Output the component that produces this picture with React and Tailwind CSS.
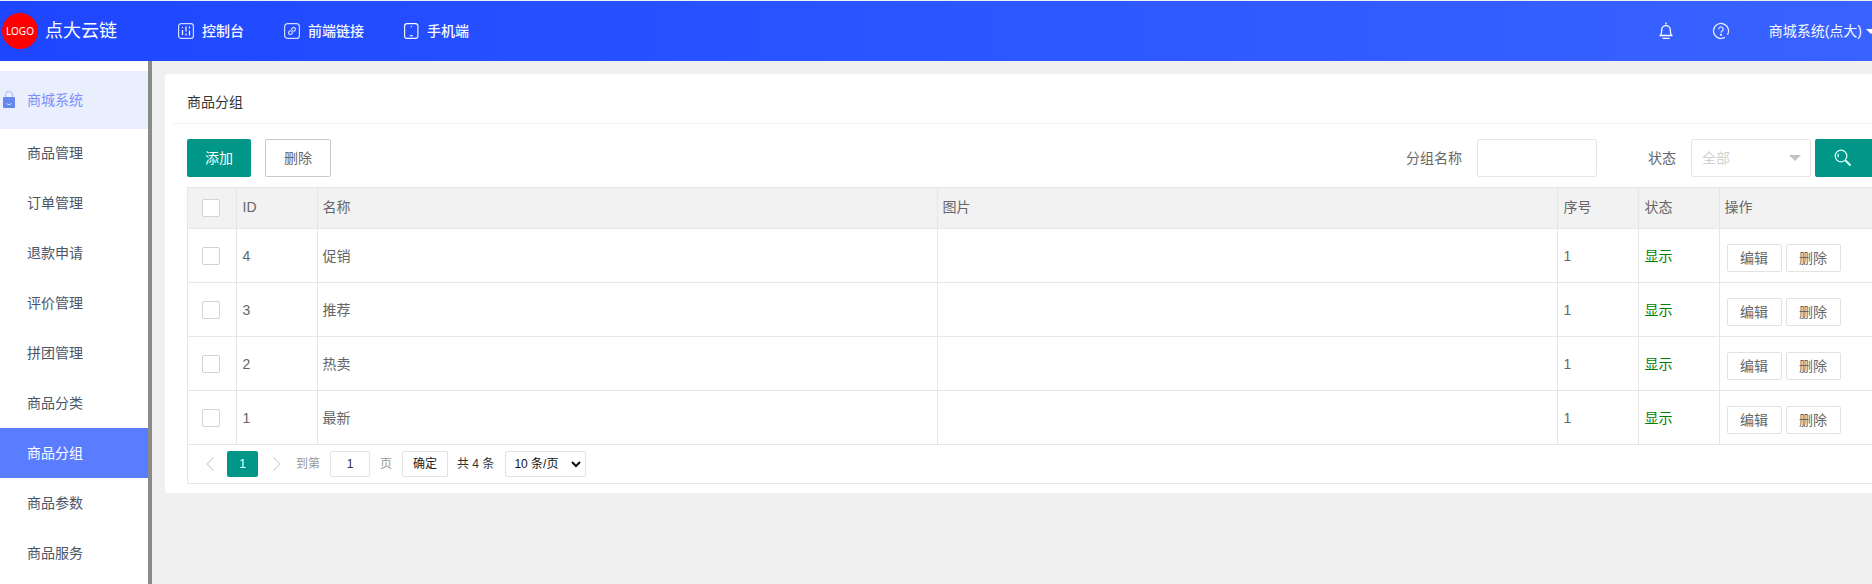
const FONT = "font-['Liberation_Sans','Noto_Sans_CJK_SC',sans-serif]";

const SideItems = ["商品管理", "订单管理", "退款申请", "评价管理", "拼团管理", "商品分类", "商品分组", "商品参数", "商品服务"];
const Rows = [["4", "促销"], ["3", "推荐"], ["2", "热卖"], ["1", "最新"]];

function Sliders() {
  return (
    <svg width="16" height="16" viewBox="0 0 16 16" fill="none" stroke="#d3dcff" strokeWidth="1.200">
      <rect x="0.600" y="0.600" width="14.800" height="14.800" rx="2.500" />
      <path d="M4.500 7v5M4.500 4v1M8 3.500v5M8 10.500v2M11.500 3.500v2M11.500 7.500v5" stroke="#fff" />
    </svg>
  );
}
function LinkBox() {
  return (
    <svg width="16" height="16" viewBox="0 0 16 16" fill="none" stroke="#d3dcff" strokeWidth="1.200">
      <rect x="0.600" y="0.600" width="14.800" height="14.800" rx="3" />
      <path d="M7 6.500l1.600-1.600a1.700 1.700 0 012.400 2.400L9.600 8.800M9 9.500l-1.600 1.600a1.700 1.700 0 01-2.400-2.400l1.400-1.500M6.800 9.200l2.400-2.400" />
    </svg>
  );
}
function Phone() {
  return (
    <svg width="15" height="16" viewBox="0 0 15 16" fill="none" stroke="#fff" strokeWidth="1.100">
      <rect x="0.600" y="0.600" width="13.300" height="14.800" rx="2.500" />
      <path d="M7.300 3v1.200M5.700 12.800h3.200" />
    </svg>
  );
}
function Bell() {
  return (
    <svg width="16" height="18" viewBox="0 0 16 18" fill="none" stroke="#fff" strokeWidth="1.300">
      <path d="M8 0.500v2M2.500 13.500c1-1.500 1.200-3 1.200-5.500a4.300 4.300 0 018.600 0c0 2.500.2 4 1.200 5.500zM1.500 13.500h13M4.500 16.300h7" />
    </svg>
  );
}
function Help() {
  return (
    <svg width="18" height="18" viewBox="0 0 18 18" fill="none" stroke="#e8edff" strokeWidth="1.200">
      <path d="M13 15.300A7.500 7.500 0 1115.500 12.700" />
      <path d="M6.800 7.200a2.200 2.200 0 114 1.200c-.7.700-1.800 1-1.800 2.300" />
      <circle cx="9" cy="12.800" r="0.500" fill="#fff" />
    </svg>
  );
}
function Bag() {
  return (
    <svg width="14" height="17" viewBox="0 0 14 17">
      <path d="M3.500 6V4a3.500 3.500 0 017 0V6" fill="none" stroke="#b9c8f8" strokeWidth="1.500" />
      <rect x="1" y="6" width="12" height="11" rx="1" fill="#6487f0" />
      <path d="M4.500 12.500c1.200 1.400 3.800 1.400 5 0" fill="none" stroke="#dfe7ff" strokeWidth="0.900" />
    </svg>
  );
}
function Search() {
  return (
    <svg width="18" height="18" viewBox="0 0 18 18" fill="none" stroke="#d9fff9" strokeWidth="1.300">
      <circle cx="7" cy="7" r="5.800" />
      <path d="M4.200 4.800v3.500" />
      <path d="M11.500 11.500l5 5" strokeWidth="2.100" />
    </svg>
  );
}
function Check() {
  return <span className="block h-[18px] w-[18px] rounded-[2px] border border-[#d2d2d2] bg-white" />;
}
function GhostBtn({ children }) {
  return (
    <button className="h-[28px] w-[55px] rounded-[2px] border border-[#e2e2e2] bg-white text-[14px] leading-[26px] text-[#666]">
      {children}
    </button>
  );
}
function NavItem({ icon, label, cls }) {
  return (
    <div className={`flex items-center gap-[8px] ${cls}`}>
      {icon}
      <span className="text-[14px] font-medium text-[#f6f8ff]">{label}</span>
    </div>
  );
}

export default function App() {
  return (
    <div className={`flex h-[584px] w-[1872px] flex-col overflow-hidden bg-[#f0f0f0] pt-px ${FONT}`}>
      <header className="flex h-[60px] shrink-0 items-center bg-gradient-to-r from-[#1e46ff] to-[#3963ff] text-white">
        <div className="flex w-[178px] items-center pl-[2px]">
          <span className="flex h-[36px] w-[36px] items-center justify-center rounded-full bg-[#fe0000] font-['Noto_Sans'] text-[10px] text-white">LOGO</span>
          <span className="ml-[7px] text-[18px] leading-[24px]">点大云链</span>
        </div>
        <NavItem icon={<Sliders />} label="控制台" cls="w-[106px]" />
        <NavItem icon={<LinkBox />} label="前端链接" cls="w-[120px]" />
        <NavItem icon={<Phone />} label="手机端" cls="" />
        <div className="ml-auto mr-[-4px] flex items-center">
          <Bell />
          <span className="ml-[38px]"><Help /></span>
          <span className="ml-[39px] whitespace-nowrap text-[14px] text-[#f6f8ff]">商城系统(点大)</span>
          <span className="ml-[4px] h-0 w-0 border-x-[5px] border-t-[5px] border-x-transparent border-t-white" />
        </div>
      </header>
      <div className="flex min-h-0 flex-1">
        <aside className="w-[152px] shrink-0 overflow-hidden border-r-[4px] border-[#8a8a8a] bg-white pt-[10px]">
          <div className="relative flex h-[58px] items-center bg-[#e9effd] pl-[27px] text-[14px] text-[#7d8ffb]">
            <span className="absolute left-[2px] top-[20px]"><Bag /></span>
            商城系统
          </div>
          <div className="-mt-px">
            {SideItems.map((s) => (
              <div
                key={s}
                className={`flex h-[50px] items-center pl-[27px] text-[14px] ${s === "商品分组" ? "bg-[#5a7dff] text-white" : "text-[#4a5568]"}`}
              >
                {s}
              </div>
            ))}
          </div>
        </aside>
        <main className="min-w-0 flex-1 overflow-hidden pl-[13px] pt-[13px]">
          <section className="w-[1760px] rounded-[2px] bg-white pb-[9px]">
            <div className="ml-[7px] flex h-[50px] items-center border-b border-[#f3f3f3] pl-[15px] pt-[8px] text-[14px] text-[#333]">
              商品分组
            </div>
            <div className="ml-[22px] w-[1738px]">
              <div className="flex h-[63px] items-start pt-[15px]">
                <button className="h-[38px] w-[64px] rounded-[2px] bg-[#009688] text-[14px] text-white">添加</button>
                <button className="ml-[14px] h-[38px] w-[66px] rounded-[2px] border border-[#c9c9c9] bg-white text-[14px] text-[#666]">删除</button>
                <div className="ml-[1075px] flex h-[38px] items-center text-[14px] text-[#666]">
                  <span>分组名称</span>
                  <span className="ml-[15px] h-[38px] w-[120px] rounded-[2px] border border-[#e6e6e6]" />
                  <span className="ml-[51px]">状态</span>
                  <div className="ml-[15px] flex h-[38px] w-[120px] items-center justify-between rounded-[2px] border border-[#e6e6e6] pl-[10px] pr-[9px] text-[#d2d2d2]">
                    全部
                    <span className="h-0 w-0 border-x-[6px] border-t-[6px] border-x-transparent border-t-[#c2c2c2]" />
                  </div>
                  <button className="ml-[4px] flex h-[38px] w-[64px] items-center rounded-[2px] bg-[#009688] pl-[19px]"><Search /></button>
                </div>
              </div>
              <div className="border border-[#e6e6e6]">
                <table className="w-full table-fixed border-collapse text-[14px] text-[#666]">
                  <colgroup>
                    <col className="w-[48px]" />
                    <col className="w-[81px]" />
                    <col className="w-[620px]" />
                    <col className="w-[620px]" />
                    <col className="w-[81px]" />
                    <col className="w-[81px]" />
                    <col />
                  </colgroup>
                  <thead>
                    <tr className="h-[40px] bg-[#f2f2f2]">
                      <th className="border-r border-[#e6e6e6] pl-[14px]"><Check /></th>
                      {["ID", "名称", "图片", "序号", "状态", "操作"].map((h) => (
                        <th key={h} className="border-r border-[#e6e6e6] pl-[5px] text-left font-normal">
                          <span className={h === "ID" || h === "序号" || h === "状态" ? "pl-px" : ""}>{h}</span>
                        </th>
                      ))}
                    </tr>
                  </thead>
                  <tbody>
                    {Rows.map(([id, name]) => (
                      <tr key={id} className="h-[54px] border-t border-[#e6e6e6]">
                        <td className="border-r border-[#e6e6e6] pl-[14px] pt-[2px]"><Check /></td>
                        <td className="border-r border-[#e6e6e6] pl-[6px] pt-[2px]">{id}</td>
                        <td className="border-r border-[#e6e6e6] pl-[5px] pt-[2px]">{name}</td>
                        <td className="border-r border-[#e6e6e6]" />
                        <td className="border-r border-[#e6e6e6] pl-[6px] pt-[2px]">1</td>
                        <td className="border-r border-[#e6e6e6] pl-[6px] pt-[2px] text-[#008000]">显示</td>
                        <td className="pl-[7px]">
                          <div className="flex items-center gap-[4px] pt-[6px]">
                            <GhostBtn>编辑</GhostBtn>
                            <GhostBtn>删除</GhostBtn>
                          </div>
                        </td>
                      </tr>
                    ))}
                  </tbody>
                </table>
                <div className="flex h-[39px] items-center border-t border-[#e6e6e6] pl-[17px] text-[12px]">
                  <svg width="10" height="16" viewBox="0 0 10 16" fill="none" stroke="#d8d8d8" strokeWidth="1.300"><path d="M8.500 1.500L2 8l6.500 6.500" /></svg>
                  <span className="ml-[12px] flex h-[26px] w-[31px] items-center justify-center rounded-[2px] bg-[#009688] text-white">1</span>
                  <svg className="ml-[14px]" width="10" height="16" viewBox="0 0 10 16" fill="none" stroke="#d8d8d8" strokeWidth="1.300"><path d="M1.500 1.500L8 8l-6.500 6.500" /></svg>
                  <span className="ml-[14px] text-[#999]">到第</span>
                  <span className="ml-[10px] flex h-[26px] w-[40px] items-center justify-center rounded-[2px] border border-[#e2e2e2] text-[#333]">1</span>
                  <span className="ml-[10px] text-[#999]">页</span>
                  <span className="ml-[10px] flex h-[26px] w-[46px] items-center justify-center rounded-[2px] border border-[#e2e2e2] text-[#222]">确定</span>
                  <span className="ml-[9px] text-[#333]">共 4 条</span>
                  <div className="ml-[11px] flex h-[26px] w-[81px] items-center justify-between rounded-[2px] border border-[#e2e2e2] pl-[8px] pr-[3px] text-[#111]">
                    10 条/页
                    <svg width="12" height="10" viewBox="0 0 12 10" fill="none" stroke="#111" strokeWidth="2"><path d="M2 3l4 4 4-4" /></svg>
                  </div>
                </div>
              </div>
            </div>
          </section>
        </main>
      </div>
    </div>
  );
}
